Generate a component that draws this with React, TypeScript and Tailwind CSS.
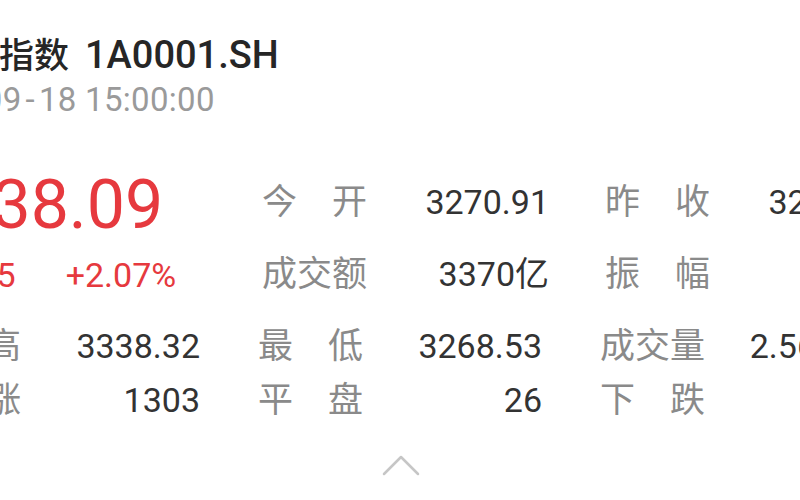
import React from "react";

function Label({ text }: { text: string }) {
  const chars = Array.from(text);
  return (
    <span className="flex w-[105px] justify-between [font-family:'Noto_Sans_CJK_SC',sans-serif] text-[35px] leading-none text-[#8a8a8a]">
      {chars.map((c, i) => (
        <span key={i}>{c}</span>
      ))}
    </span>
  );
}

function TopCell({ label, value }: { label: string; value: string }) {
  return (
    <div className="flex w-[287px] shrink-0 items-baseline justify-between">
      <Label text={label} />
      <span className="text-[34px] leading-none text-[#333333]">{value}</span>
    </div>
  );
}

function LowCell({ label, value }: { label: string; value: string }) {
  return (
    <div className="flex w-[284px] shrink-0 items-baseline justify-between">
      <Label text={label} />
      <span className="text-[34px] leading-none text-[#333333]">{value}</span>
    </div>
  );
}

export default function App() {
  return (
    <div className="relative h-[500px] w-[800px] overflow-hidden bg-white [font-family:Roboto,'Noto_Sans_CJK_SC',sans-serif]">
      <div className="ml-[-84px] w-[1100px] pt-[34px]">
        <div className="ml-[13px] flex h-[38px] items-baseline whitespace-nowrap text-[38px] font-medium leading-[38px] text-[#262626]">
          <span className="[font-family:'Noto_Sans_CJK_SC',sans-serif] text-[35px]">上证指数</span>
          <span className="ml-[16px]">1A0001.SH</span>
        </div>
        <div className="ml-[-25px] mt-[12px] h-[32px] whitespace-nowrap text-[33px] leading-[32px] tracking-[0.3px] text-[#9a9a9a]">
          2020<span className="mx-[4px]">-</span>09<span className="mx-[4px]">-</span>18 15:00:00
        </div>

        <div className="mt-[55px] flex">
          <div className="w-[346px] shrink-0 text-[#e6393e]">
            <div className="h-[68px] text-[68px] leading-[68px]">3338.09</div>
            <div className="ml-[-5px] mt-[20px] flex h-[32px] gap-[50px] text-[34px] leading-[32px]">
              <span>+67.65</span>
              <span>+2.07%</span>
            </div>
          </div>
          <div className="mt-[10px] flex flex-col">
            <div className="flex h-[72px] items-baseline gap-[56px]">
              <TopCell label="今开" value="3270.91" />
              <TopCell label="昨收" value="3270.44" />
            </div>
            <div className="flex h-[72px] items-baseline gap-[56px]">
              <TopCell label="成交额" value="3370亿" />
              <TopCell label="振幅" value="2.13%" />
            </div>
          </div>
        </div>

        <div className="flex flex-col">
          <div className="flex h-[54px] items-baseline gap-[58px]">
            <LowCell label="最高" value="3338.32" />
            <LowCell label="最低" value="3268.53" />
            <LowCell label="成交量" value="2.56亿手" />
          </div>
          <div className="flex h-[54px] items-baseline gap-[58px]">
            <LowCell label="上涨" value="1303" />
            <LowCell label="平盘" value="26" />
            <LowCell label="下跌" value="209" />
          </div>
        </div>
      </div>

      <div className="mt-[20px] flex justify-center">
        <svg width="40" height="24" viewBox="0 0 40 24" fill="none" className="ml-[2px]">
          <path d="M3 21 L20 4 L37 21" stroke="#c6c6c6" strokeWidth="2.5" strokeLinecap="round" strokeLinejoin="round" />
        </svg>
      </div>
    </div>
  );
}
